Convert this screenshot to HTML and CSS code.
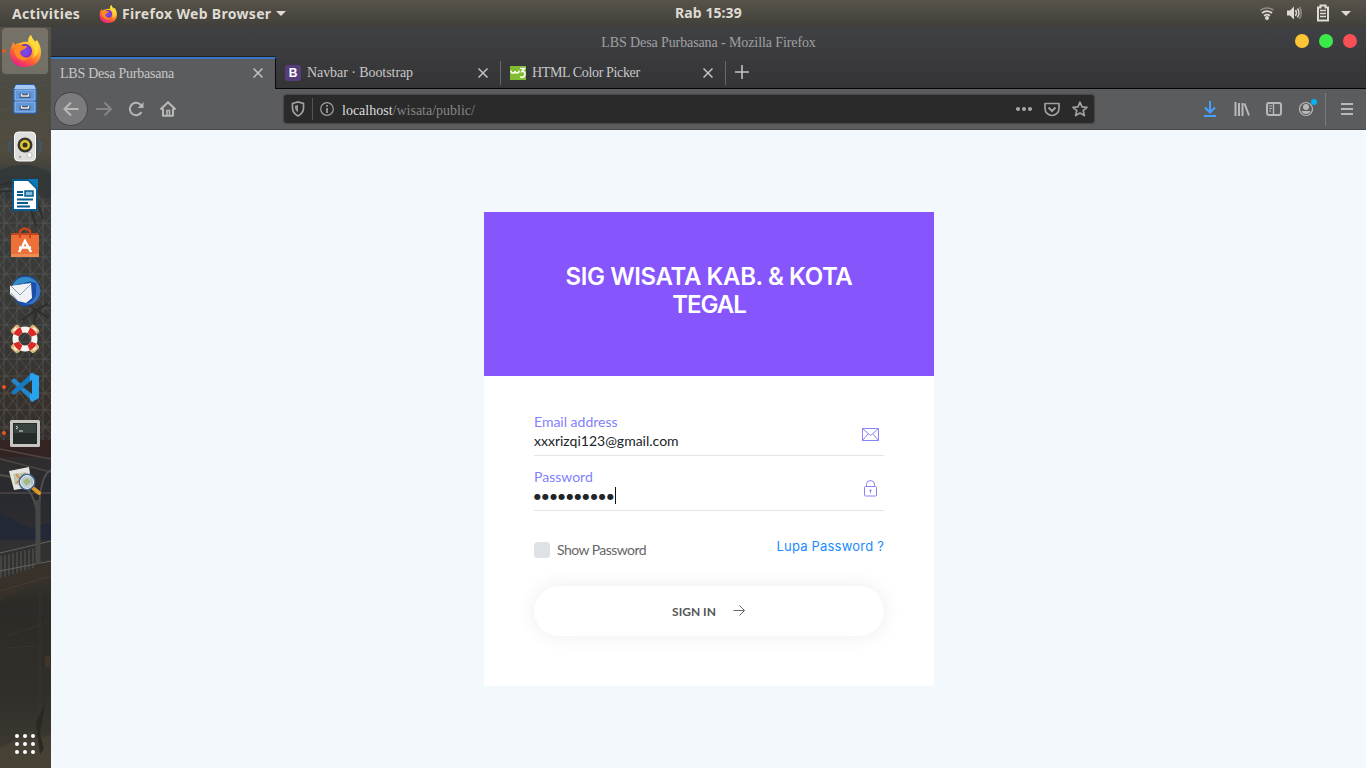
FILE: index.html
```html
<!DOCTYPE html>
<html lang="id">
<head>
<meta charset="utf-8">
<title>LBS Desa Purbasana</title>
<link rel="stylesheet" href="styles.css">
</head>
<body>
<header class="panel">
  <div class="panel-left">
    <span class="activities">Activities</span>
    <svg class="panel-fox" viewBox="0 0 32 32"><use href="#fox"/></svg>
    <span class="app-name">Firefox Web Browser</span>
    <svg class="caret-down" viewBox="0 0 10 5"><path d="M0 0h10L5 5z" fill="#dfdbd2"/></svg>
  </div>
  <span class="clock">Rab 15:39</span>
  <svg class="status" viewBox="1256 0 100 27" width="100" height="27" fill="none" stroke="#dfdbd2">
    <path d="M1260.5 10.2q6.500-4.600 13 0" stroke="#8c8a80" stroke-width="1.500"/>
    <path d="M1262 13q5-3.600 10 0M1264 15.700q3-2 6 0" stroke-width="1.700"/><circle cx="1267" cy="18" r="2" fill="#dfdbd2" stroke="none"/>
    <path d="M1287 10.500h3l4-4v13l-4-4h-3z" fill="#dfdbd2" stroke="none"/>
    <path d="M1295.500 10q2 3 0 6M1297.500 8.500q3 4.500 0 9" stroke-width="1.400"/><path d="M1299.500 7q3.500 6 0 12" stroke="#8c8a80" stroke-width="1.500"/>
    <path d="M1318 7.500h2.500v-2h5v2h2.500v13h-10z" stroke-width="2"/><path d="M1320 10.500h6M1320 13.500h6M1320 16.500h6" stroke-width="1.500"/>
    <path d="M1341 11h10l-5 5z" fill="#dfdbd2" stroke="none"/>
  </svg>
</header>
<div class="desktop">
  <nav class="dock">
    <svg class="wallpaper" viewBox="0 0 51 741" width="51" height="741">
      <defs>
        <linearGradient id="wall" x1="0" y1="0" x2="0" y2="1">
          <stop offset="0" stop-color="#57534a"/><stop offset=".08" stop-color="#4c4b43"/><stop offset=".17" stop-color="#504b3e"/><stop offset=".2" stop-color="#3c3d3b"/><stop offset=".4" stop-color="#393937"/><stop offset=".52" stop-color="#36302c"/><stop offset=".64" stop-color="#282a30"/><stop offset=".73" stop-color="#383531"/><stop offset=".78" stop-color="#2d2b27"/><stop offset=".9" stop-color="#302f2a"/><stop offset="1" stop-color="#403c33"/>
        </linearGradient>
        <pattern id="lattice" width="13" height="17" patternUnits="userSpaceOnUse"><path d="M0 0l13 17M13 0L0 17M4 0v17M0 9h13" stroke="#70726e" fill="none" opacity=".5"/></pattern>
        <pattern id="rails" width="4" height="20" patternUnits="userSpaceOnUse"><path d="M1 0v20" stroke="#666864"/></pattern>
      </defs>
      <path d="M0 0h51v741H0z" fill="url(#wall)"/>
      <g opacity=".72">
      <path d="M0 60q18 6 51-3M0 83q25-5 51 4M0 112q22-7 51-1" stroke="#66604f" fill="none" opacity=".5"/>
      <path d="M0 143q28-12 51 4v24H0z" fill="#303638"/>
      <path d="M0 162q30-9 51 16v240H0z" fill="url(#lattice)"/>
      <path d="M0 158q31-10 43 34M0 165q27-7 36 35M31 330l5-47M36 283l-14 10M36 283l-10-7M36 283l12-6M36 283l13 8" stroke="#292b28" stroke-width="2" fill="none"/>
      <path d="M0 367h51M0 402h51M0 409h51" stroke="#634b3a" opacity=".7"/>
      <path d="M0 413h51v17H0z" fill="#35201e"/>
      <path d="M0 422l51 10M0 432l51 13M0 466h51" stroke="#5d5148" stroke-width="1.500"/>
      <path d="M0 448q35 2 39 49M51 443q-13 6-12 54" stroke="#5d5d59" stroke-width="2" fill="none"/>
      <path d="M0 486l30 15 21-6v18L0 520z" fill="#20273a"/>
      <path d="M0 513h51v35L0 563z" fill="#303130"/>
      <path d="M0 529l36-8v31L0 563z" fill="url(#rails)"/><path d="M0 526l51-12M0 544l51-10" stroke="#777771"/>
      <path d="M38 473v64" stroke="#50524f" stroke-width="5"/>
      <path d="M0 551l51-15v14L0 574z" fill="#3a322a"/><path d="M0 564l51-15" stroke="#4c4136"/>
      <path d="M7 609l43-14M5 621l33-2M40 564v142" stroke="#454640" opacity=".5"/><path d="M45 629h5v11h-5z" fill="#5d4028" opacity=".6"/>
      <path d="M0 721l35-19-7 11 23-5v33H0z" fill="#554c3d" opacity=".55"/><path d="M36 696l9-20-5 31 4 15-4 5" fill="#242520"/>
      </g>
    </svg>
    <div class="dock-item active"><i class="dot"></i>
      <svg width="32" height="32" viewBox="0 0 32 32">
        <defs><linearGradient id="flame" x1=".8" y1="0" x2=".25" y2="1"><stop stop-color="#fff44f"/><stop offset=".4" stop-color="#ffb02a"/><stop offset=".68" stop-color="#ff6036"/><stop offset="1" stop-color="#e6198c"/></linearGradient><radialGradient id="globe"><stop stop-color="#6852e8"/><stop offset=".7" stop-color="#8b39df"/><stop offset="1" stop-color="#592abe"/></radialGradient></defs>
        <g id="fox"><path d="M4 7l2 3q2-2 5-2 4-2 8-1 0-5 3-7 1 4 4 7l2-2q4 6 4 12 0 14-16 15Q2 32 1 18 1 13 3 10z" fill="url(#flame)"/><circle cx="16" cy="16" r="7" fill="url(#globe)"/><path d="M5 11q5-3 9 0h4q-1 3-5 4-3 2-1 5 4 4 9 2-4 6-11 2-6-4-5-13z" fill="#ff8a24"/><path d="M22 0q-4 6 1 10 5 6 0 13 10-5 5-15-5-4-6-8z" fill="#ffdd3c" opacity=".85"/></g>
      </svg></div>
    <div class="dock-item"><svg width="32" height="32" viewBox="0 0 32 32"><path d="M7 1h18l3 5v25H4V6z" fill="#2e5e9f"/><path d="M7 2h18l2 4H5z" fill="#a3c8f3"/><path d="M6 7h20v10H6zM6 19h20v10H6z" fill="#5e97dc" stroke="#96bbeb"/><path d="M12.500 10.500v2.500h7v-2.500M12.500 22.500v2.500h7v-2.500" fill="none" stroke="#344760" stroke-width="3.500"/><path d="M12.500 10.500v2.500h7v-2.500M12.500 22.500v2.500h7v-2.500" fill="none" stroke="#eee" stroke-width="1.600"/></svg></div>
    <div class="dock-item speaker"><svg width="34" height="32" viewBox="0 0 34 32"><path d="M4 8q-4 8 0 17M30 8q4 8 0 17M1.500 11q-2 6 0 11M32.500 11q2 6 0 11" stroke="#385b7c" stroke-width="1.500" fill="none" opacity=".65"/><rect x="6.500" y="2" width="21" height="29" rx="4" fill="#dedfdd" stroke="#fafafa"/><circle cx="17" cy="15" r="7.500" fill="#37362f"/><circle cx="17" cy="15" r="5" fill="#e2c82b"/><circle cx="17" cy="15" r="2.500" fill="#34332a"/><circle cx="21.500" cy="25" r="2.500" fill="#fff" stroke="#bbb"/><circle cx="12" cy="27" r="1.300" fill="#aaa"/></svg></div>
    <div class="dock-item"><svg width="32" height="32" viewBox="0 0 32 32"><path d="M3 0h26v32H3z" fill="#075b8e"/><path d="M5 2h14l8 8v20H5z" fill="#fff"/><path d="M19 0h10v10z" fill="#087bb8"/><path d="M8 13h6M8 16h6M8 20.500h16M8 24h11M8 27.500h13" stroke="#075b8e" stroke-width="2"/><rect x="16" y="12" width="8" height="5" fill="#82bfdd" stroke="#075b8e" stroke-width="1.500"/></svg></div>
    <div class="dock-item"><svg width="32" height="32" viewBox="0 0 32 32"><path d="M11 8V4q5-5 10 0v4" stroke="#c94517" stroke-width="2.500" fill="none"/><path d="M3 6h26l1 3H2z" fill="#bd461d"/><path d="M2 8h28v22H2z" fill="#ed7038"/><path d="M2 27h28v3H2z" fill="#f08b55"/><path d="M10 25l2-3.500M13.500 19L16 14l6 11M10 20.500h12" stroke="#fff" stroke-width="2.500" fill="none"/><path d="M11 7v4M21 7v4" stroke="#c94517" stroke-width="2"/></svg></div>
    <div class="dock-item"><svg width="34" height="32" viewBox="0 0 34 32"><path d="M4 12Q6 3 14 1q12-2 17 8 4 12-5 19-5 4-13 3L7 25z" fill="#1a4fa9"/><path d="M5 10Q9 1 19 2q7 1 11 7-9-5-15 0-5-2-9 3z" fill="#348cc9"/><path d="M2 11l21-3 1 15-6 5-8-2-8-7z" fill="#f0f1f5"/><path d="M3 11l9 9 11-11M3 18l6 7" stroke="#8b9bb1" fill="none"/><path d="M28 6q7 8 3 16-5 9-14 7 8-1 11-9z" fill="#3973c9"/></svg></div>
    <div class="dock-item"><svg width="32" height="32" viewBox="0 0 32 32"><path d="M5 8l3-3M24 5l3 3M27 24l-3 3M8 27l-3-3" stroke="#dab779" stroke-width="6" stroke-linecap="round"/><path d="M5 8l3-3M24 5l3 3M27 24l-3 3M8 27l-3-3" stroke="#fff0cf" stroke-width="3"/><circle cx="16" cy="16" r="9.500" fill="none" stroke="#f4f4f0" stroke-width="6"/><circle cx="16" cy="16" r="9.500" fill="none" stroke="#da2929" stroke-width="6" stroke-dasharray="7.460 7.460" stroke-dashoffset="-3.730"/></svg></div>
    <div class="dock-item"><i class="dot"></i><svg width="32" height="32" viewBox="0 0 32 32"><path d="M2 10l3-3 19 16v8z" fill="#2387cd"/><path d="M2 21l3 3L24 9V1z" fill="#157bc0"/><path d="M23 2l7 3v22l-7 4-2-2V3z" fill="#28a3ee"/><path d="M23 9v14l-9-7z" fill="#33342f"/></svg></div>
    <div class="dock-item terminal"><i class="dot"></i><svg width="32" height="32" viewBox="0 0 32 32"><rect x="1" y="3" width="30" height="27" rx="1.500" fill="#c6c6c2"/><path d="M4 6h24v21H4z" fill="#252c2a"/><path d="M5 7h22v9H5z" fill="#38423e"/><path d="M7 9l2 1.500L7 12M10 14h4" stroke="#e0e5e0" fill="none"/></svg></div>
    <div class="dock-item viewer"><svg width="34" height="32" viewBox="0 0 34 32"><path d="M1 6l20-4 3 20-18 3z" fill="#e5e5df"/><path d="M5 9l13-2 2 11-13 2z" fill="#c2c7a8"/><path d="M8 9l4 5 5-5M8 18l9-6" stroke="#d98048" stroke-width="1.500" fill="none"/><path d="M25 23l6 5" stroke="#dd9a25" stroke-width="4" stroke-linecap="round"/><circle cx="19" cy="17" r="7.500" fill="#bccbd4" opacity=".85"/><circle cx="19" cy="17" r="7.500" fill="none" stroke="#42658d" stroke-width="2"/><path d="M15 16l5-3 3 4-5 4z" fill="#94ae60" opacity=".7"/><circle cx="19" cy="17" r="6.500" fill="none" stroke="#eef3f5"/></svg></div>
    <svg class="apps" width="22" height="22" viewBox="0 0 22 22" fill="#fff"><circle cx="3" cy="3" r="2"/><circle cx="11" cy="3" r="2"/><circle cx="19" cy="3" r="2"/><circle cx="3" cy="11" r="2"/><circle cx="11" cy="11" r="2"/><circle cx="19" cy="11" r="2"/><circle cx="3" cy="19" r="2"/><circle cx="11" cy="19" r="2"/><circle cx="19" cy="19" r="2"/></svg>
  </nav>
  <section class="browser">
    <div class="chrome-top">
      <div class="titlebar"><span class="window-title">LBS Desa Purbasana - Mozilla Firefox</span><div class="window-buttons"><i class="minimize"></i><i class="maximize"></i><i class="close"></i></div></div>
      <div class="tabs">
        <div class="tab tab-active"><span class="t-lbs">LBS Desa Purbasana</span><svg class="x" viewBox="0 0 10 10"><path d="M.5.5l9 9M9.500.5l-9 9"/></svg></div>
        <div class="tab"><b class="boot">B</b><span class="t-nav">Navbar · Bootstrap</span><svg class="x" viewBox="0 0 10 10"><path d="M.5.5l9 9M9.500.5l-9 9"/></svg></div>
        <div class="tab"><svg class="w3" width="16" height="14" viewBox="0 0 16 14"><path d="M0 0h16v14H0z" fill="#80bd32"/><path d="M1 4.500q0 3 2.500 2.500Q5 7 5 5q0 2 2 2 2 0 2-2.500M10 2.500h4.500l-2.500 3q3-.5 3 2.500 0 4-5 3" stroke="#fff" stroke-width="1.500" fill="none"/></svg><span class="t-color">HTML Color Picker</span><svg class="x" viewBox="0 0 10 10"><path d="M.5.5l9 9M9.500.5l-9 9"/></svg></div>
        <svg class="plus" width="14" height="14" viewBox="0 0 14 14"><path d="M7 0v14M0 7h14" stroke="#c2c2c2" stroke-width="1.600"/></svg>
      </div>
    </div>
    <div class="toolbar">
      <span class="back"><svg width="16" height="16" viewBox="0 0 16 16"><path d="M15.500 8H1M8 1.500L1.500 8 8 14.500"/></svg></span>
      <svg class="forward" width="16" height="16" viewBox="0 0 16 16"><path d="M0 8h15M8.500 1.500L15 8l-6.500 6.500"/></svg>
      <svg class="reload" width="16" height="16" viewBox="0 0 16 16"><path d="M13.500 11A6.200 6.200 0 1 1 12 3.200L14 5"/><path d="M15.500 1v6H9.700z" fill="#b8b8b8" stroke="none"/></svg>
      <svg class="home" width="16" height="16" viewBox="0 0 16 16"><path d="M.5 8.500L8 1.200l7.500 7.300M3 7.500v7.300h10V7.500" stroke-linejoin="round"/><path d="M7 14V9.500h2.500V14" stroke-width="1.600"/></svg>
      <div class="address">
        <svg width="14" height="16" viewBox="0 0 14 16"><path d="M1.500 2.500L7 1l5.500 1.500v4.500q0 5-5.500 8-5.500-3-5.500-8z" stroke-width="1.700"/><path d="M7 4v7.500Q4 9.500 4 7V4.700z" fill="#969697" stroke="none"/></svg>
        <i class="address-line"></i>
        <svg class="info" width="14" height="14" viewBox="0 0 14 14"><circle cx="7" cy="7" r="6.300" stroke-width="1.200"/><path d="M7 6v5M7 3v1.700" stroke-width="1.700"/></svg>
        <span class="url"><span>localhost</span>/wisata/public/</span>
        <svg class="more" width="16" height="4" viewBox="0 0 16 4"><g fill="#aaa" stroke="none"><circle cx="2" cy="2" r="2"/><circle cx="8" cy="2" r="2"/><circle cx="14" cy="2" r="2"/></g></svg>
        <svg class="pocket" width="16" height="15" viewBox="0 0 16 15"><path d="M1 1.500h14v5a7 7 0 0 1-14 0z" stroke-width="1.700" stroke-linejoin="round"/><path d="M4.500 5.500L8 9l3.500-3.500" stroke-width="2"/></svg>
        <svg class="star" width="16" height="16" viewBox="0 0 16 16"><path d="M8 1.200l2 4.600 5 .5-3.800 3.300 1.200 5L8 12l-4.400 2.600 1.200-5L1 6.300l5-.5z" stroke-width="1.700" stroke-linejoin="round"/></svg>
      </div>
      <div class="tools">
        <svg class="download" width="14" height="16" viewBox="0 0 14 16"><path d="M7 0v11M2 6.500l5 5 5-5M1 15h12" stroke="#45a1ff" stroke-width="2"/></svg>
        <svg width="16" height="14" viewBox="0 0 16 14"><path d="M1.500 0v14M5 1v13M8.500 1v13M10.500 1.500l4.500 12" stroke-width="2"/></svg>
        <svg width="16" height="14" viewBox="0 0 16 14"><rect x="1" y="1" width="14" height="12" rx="2" stroke-width="2"/><path d="M7.500 1v12" stroke-width="1.400"/><path d="M3 4h3M3 6.500h3M3 9h2" stroke-width="1"/></svg>
        <svg class="account" width="18" height="18" viewBox="0 0 18 18"><circle cx="7" cy="10" r="6.500" stroke-width="1.200"/><circle cx="7" cy="8" r="3" fill="#b8b8b8" stroke="none"/><path d="M2.500 12h9q-1 3-4.500 3t-4.500-3z" fill="#b8b8b8" stroke="none"/><circle cx="15" cy="3" r="3" fill="#00b3f4" stroke="none"/></svg>
        <i class="tool-line"></i>
        <svg class="menu" width="12" height="12" viewBox="0 0 12 12"><path d="M0 1h12M0 6h12M0 11h12" stroke-width="2"/></svg>
      </div>
    </div>
    <main class="page">
      <form class="card">
        <div class="card-head"><h1><span class="line-one">SIG WISATA KAB. &amp; KOTA</span><br><span class="line-two">TEGAL</span></h1></div>
        <div class="card-body">
          <div class="field"><div><div class="label">Email address</div><div class="value">xxxrizqi123@gmail.com</div></div><svg class="mail" width="17" height="13" viewBox="0 0 17 13"><path d="M.5.5h16v12H.5zM.5.5l8 7 8-7M.5 12.500l5.500-6.500M16.500 12.500L11 6"/></svg></div>
          <div class="field"><div><div class="label">Password</div><div class="value password"><span class="bullets">●●●●●●●●●●</span><i class="text-caret"></i></div></div><svg class="lock" width="13" height="17" viewBox="0 0 13 17"><rect x=".5" y="6.500" width="12" height="9.500" rx="1"/><path d="M2.500 6.500V4.300a4 3.800 0 0 1 8 0v2.200M6.500 10v3"/><circle cx="6.500" cy="10.500" r=".7"/></svg></div>
          <div class="options"><div class="show"><i class="check"></i><span>Show Password</span></div><a class="forgot">Lupa Password ?</a></div>
          <div class="sign"><span>SIGN IN</span><svg width="12" height="11" viewBox="0 0 12 11"><path d="M.5 5.500h11M6.500.5l5 5-5 5"/></svg></div>
        </div>
      </form>
    </main>
  </section>
</div>
</body>
</html>
```
FILE: styles.css
```css
* { box-sizing: border-box; }
body { margin: 0; width: 1366px; height: 768px; overflow: hidden; display: flex; flex-direction: column; font-family: Lato, sans-serif; }
svg { flex: none; display: block; }
.panel { height: 27px; background: linear-gradient(#57534a, #403f39); display: grid; grid-template-columns: 663px 1fr auto; align-items: center; font: 700 14px/25px "Noto Sans", sans-serif; color: #dfdbd2; padding: 0 10px 0 12px; white-space: nowrap; }
.panel-left { display: flex; align-items: center; }
.activities { width: 87px; letter-spacing: .32px; }
.panel-fox { width: 18px; height: 18px; margin-right: 5px; }
.app-name { width: 150px; letter-spacing: .32px; }
.caret-down { width: 10px; height: 5px; margin-left: 4px; }
.clock { letter-spacing: .08px; padding-bottom: 2px; }
.status { justify-self: end; }
.desktop { flex: 1; display: flex; min-height: 0; }
.dock { width: 51px; position: relative; display: flex; flex-direction: column; overflow: hidden; }
.wallpaper { position: absolute; left: 0; top: 0; }
.dock-item { position: relative; flex: none; width: 46px; height: 46px; margin: 1px 0 1px 2px; display: flex; align-items: center; justify-content: center; }
.dock-item.active { background: rgba(150, 145, 134, .5); border-radius: 4px; }
.speaker { top: -1px; }
.terminal, .viewer { top: -2px; }
.dot { position: absolute; left: 0; top: 21px; width: 4px; height: 4px; border-radius: 50%; background: #e95420; }
.apps { position: relative; margin: auto 0 13px 14px; }
.browser { width: 1315px; display: flex; flex-direction: column; }
.chrome-top { height: 62px; background: linear-gradient(#404144, #343436); }
.titlebar { height: 29px; display: grid; grid-template-columns: 1fr auto 1fr; align-items: center; font: 14px/28px "Liberation Serif", serif; color: #a0a1a2; }
.window-title { grid-column: 2; letter-spacing: -.1px; padding-top: 2px; }
.window-buttons { justify-self: end; display: flex; gap: 10px; padding-right: 9px; margin-top: -2px; }
.window-buttons i { width: 14px; height: 14px; border-radius: 50%; }
.minimize { background: #fcc535; }
.maximize { background: #3be948; }
.close { background: #f65056; }
.tabs { height: 33px; display: flex; border-bottom: 1px solid #050505; font: 14px "Liberation Serif", serif; color: #c8c8c8; white-space: nowrap; }
.tab { position: relative; width: 225px; display: flex; align-items: center; padding: 2px 13px 0 9px; }
.tab::after { content: ""; position: absolute; right: 0; top: 5px; height: 24px; width: 1px; background: #68696b; }
.tab-active { background: #5b5c5e; border-top: 2px solid #3875c5; border-right: 1px solid #0b0b0c; height: 32px; margin-top: 1px; margin-bottom: -1px; padding: 0 12px 0 9px; box-shadow: 0 -1px #222; }
.tab-active::after { display: none; }
.tab span { height: 17px; }
.tab-active .x { margin-top: -2px; }
.x { width: 10px; height: 10px; margin-left: auto; fill: none; stroke: #c2c2c2; stroke-width: 1.500; }
.t-lbs { letter-spacing: -.24px; }
.t-nav { letter-spacing: -.07px; }
.t-color { letter-spacing: -.36px; }
.boot { width: 16px; height: 16px; border-radius: 3px; background: #563d7c; color: #fff; font: bold 12px/16px "Liberation Sans", sans-serif; text-align: center; margin-right: 6px; }
.w3 { margin-right: 6px; }
.plus { margin: 9px 0 0 9px; }
.toolbar { height: 41px; background: #5b5c5e; border-bottom: 1px solid #49494a; display: flex; align-items: center; padding-left: 3px; }
.toolbar svg { fill: none; stroke: #b8b8b8; stroke-width: 2; }
.back { flex: none; width: 34px; height: 34px; border-radius: 50%; background: #7b7b7d; border: 1px solid #444446; display: flex; align-items: center; justify-content: center; margin-right: 8px; }
.toolbar .forward { stroke: #858587; margin-right: 16px; }
.reload { margin-right: 16px; }
.address { flex: none; margin-left: 107px; width: 812px; height: 30px; background: #2a2a2a; border: 1px solid #48484a; border-radius: 4px; display: flex; align-items: center; padding: 0 6px 0 7px; box-shadow: 0 0 1px #444; }
.address svg { stroke: #a0a0a1; }
.address-line { width: 1px; height: 22px; background: #555; margin: 0 7px; }
.url { font: 14px/28px "Liberation Serif", serif; color: #858585; margin: 3px auto 0 8px; }
.url span { color: #ddd; }
.more { margin-right: 12px; }
.pocket { margin-right: 12px; }
.tools { flex: none; display: flex; align-items: center; margin-left: 108px; }
.tools svg { margin-right: 16px; }
.tools .download { margin-right: 17px; }
.tools .account { margin: -3px 8px 0 1px; }
.tool-line { width: 1px; height: 33px; background: #7b7b7d; margin-right: 15px; }
.tools .menu { margin-right: 0; }
.page { flex: 1; background: #f2f8fb; padding: 82px 0 0 433px; }
.card { margin: 0; width: 450px; height: 474px; border-radius: 3px; background: #fff; }
.card-head { height: 164px; background: #8655fc; padding-top: 51px; }
h1 { margin: 0; font: 600 24px/28px "Inter", sans-serif; color: #fff; text-align: center; }
.line-one { letter-spacing: -.4px; }
.line-two { letter-spacing: -1px; }
.card-body { padding: 25px 50px 0; }
.field { height: 55px; border-bottom: 1px solid #e5e5e5; display: flex; justify-content: space-between; padding-top: 11px; color: #827ffe; }
.field svg { fill: none; stroke: #8884f8; stroke-width: 1; }
.label { font-size: 14px; line-height: 20px; }
.value { color: #212529; font-size: 14px; line-height: 18px; }
.password { display: flex; }
.bullets { font: 8px/19px "DejaVu Sans", sans-serif; letter-spacing: 1.12px; width: 81px; white-space: nowrap; }
.text-caret { width: 1px; height: 17px; background: #111; }
.mail { margin: 16px 5px 0 0; }
.lock { margin: 13px 7px 0 0; }
.options { display: flex; justify-content: space-between; padding-top: 25px; height: 75px; }
.show { display: flex; height: 27px; align-items: center; color: #666; font-size: 14px; letter-spacing: -.55px; }
.check { width: 16px; height: 16px; border-radius: 4px; background: #dee2e6; margin: 1px 7px 0 0; }
.forgot { font: 13px/21px Inter, sans-serif; letter-spacing: .2px; color: #188bff; }
.sign { height: 50px; border-radius: 25px; background: #fff; box-shadow: 0 0 20px rgba(0, 0, 0, .08); display: flex; align-items: center; justify-content: center; gap: 17px; padding-right: 1px; color: #555; font-size: 12px; font-weight: 700; }
.sign svg { fill: none; stroke: #666; stroke-width: 1; margin-top: -1px; }
```
